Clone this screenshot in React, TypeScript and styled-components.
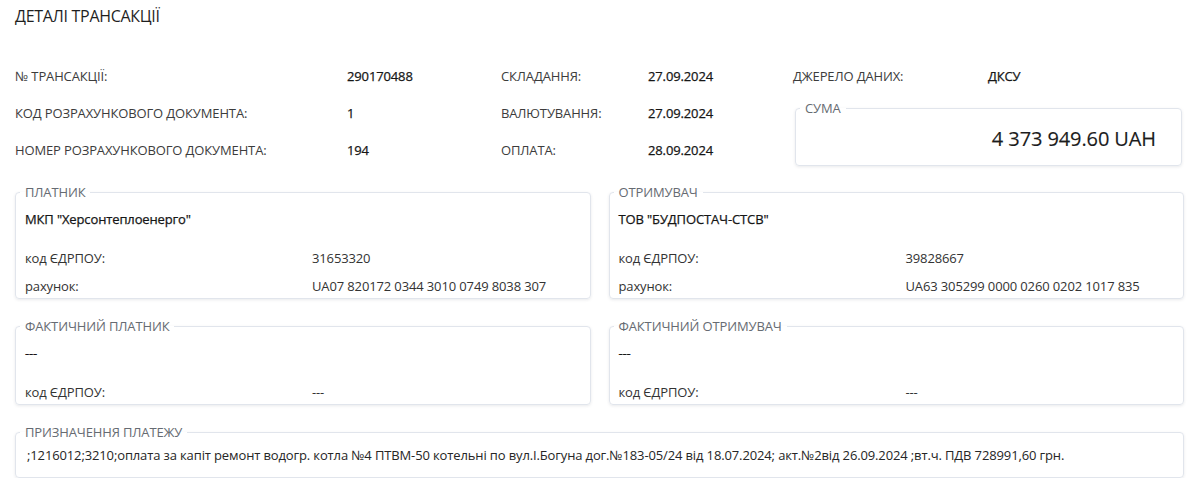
import React from "react";
import styled, { createGlobalStyle } from "styled-components";

const GlobalStyle = createGlobalStyle`
  html, body { margin: 0; padding: 0; background: #ffffff; }
  body { font-family: "Open Sans", "Noto Sans", sans-serif; color: #222; letter-spacing: -0.13px; }
  * { box-sizing: border-box; }
`;

const Page = styled.div`
  padding: 5px 16px 0 15px;
`;

const Title = styled.h1`
  margin: 0;
  font-size: 16px;
  line-height: 22px;
  font-weight: 400;
  letter-spacing: -0.3px;
  color: #1f1f1f;
`;

const InfoGrid = styled.div`
  margin-top: 30px;
  display: grid;
  grid-template-columns: 332px 154px 147px 145px 195px 1fr;
  grid-auto-rows: 37px;
  align-items: center;
  font-size: 13px;
`;

const Label = styled.div`
  color: #3c3c3c;
`;

const Value = styled.div`
  color: #161616;
  font-weight: 400;
  -webkit-text-stroke: 0.25px #161616;
`;

const Box = styled.fieldset`
  margin: 0;
  min-width: 0;
  border: 1px solid #e1e5ec;
  border-radius: 4px;
  box-shadow: 0 1px 3px rgba(40, 50, 70, 0.1);
  padding: 0 10px 0 9px;
`;

const Legend = styled.legend`
  padding: 0 5px;
  margin-left: -5px;
  font-size: 13px;
  line-height: 18px;
  color: #666b72;
`;

const SumBox = styled(Box)`
  grid-column: 5 / 7;
  grid-row: 2 / 4;
  align-self: start;
  margin: 5px 2px 0 2px;
  padding: 8px 25px 12px 9px;
`;

const Amount = styled.div`
  text-align: right;
  font-size: 20px;
  line-height: 28px;
  letter-spacing: -0.1px;
  color: #1c1c1c;
  -webkit-text-stroke: 0.15px #1c1c1c;
`;

const PartyRow = styled.div<{ $top: number }>`
  margin-top: ${(p) => p.$top}px;
  display: grid;
  grid-template-columns: 1fr 1fr;
  column-gap: 18px;
`;

const PartyBox = styled(Box)`
  padding-top: 8px;
  padding-bottom: 2px;
  font-size: 13px;
`;

const PartyName = styled.div`
  line-height: 20px;
  color: #161616;
  -webkit-text-stroke: 0.25px #161616;
  margin-bottom: 19px;
`;

const DetailGrid = styled.div`
  display: grid;
  grid-template-columns: 287px 1fr;
  grid-auto-rows: 20px;
  row-gap: 8px;
  align-items: center;
  color: #333;
`;

const PurposeBox = styled(Box)`
  margin-top: 18px;
  padding-top: 4px;
  padding-bottom: 12px;
  font-size: 13px;
`;

const PurposeText = styled.div`
  line-height: 20px;
  color: #262626;
  padding-left: 2px;
`;

type Party = {
  title: string;
  name: string;
  code: string;
  account?: string;
};

const PartyCard: React.FC<{ party: Party }> = ({ party }) => (
  <PartyBox>
    <Legend>{party.title}</Legend>
    <PartyName>{party.name}</PartyName>
    <DetailGrid>
      <div>код ЄДРПОУ:</div>
      <div>{party.code}</div>
      {party.account && (
        <>
          <div>рахунок:</div>
          <div>{party.account}</div>
        </>
      )}
    </DetailGrid>
  </PartyBox>
);

export default function App() {
  return (
    <>
      <GlobalStyle />
      <Page>
        <Title>ДЕТАЛІ ТРАНСАКЦІЇ</Title>
        <InfoGrid>
          <Label>№ ТРАНСАКЦІЇ:</Label>
          <Value>290170488</Value>
          <Label>СКЛАДАННЯ:</Label>
          <Value>27.09.2024</Value>
          <Label>ДЖЕРЕЛО ДАНИХ:</Label>
          <Value>ДКСУ</Value>

          <Label>КОД РОЗРАХУНКОВОГО ДОКУМЕНТА:</Label>
          <Value>1</Value>
          <Label>ВАЛЮТУВАННЯ:</Label>
          <Value>27.09.2024</Value>
          <SumBox>
            <Legend>СУМА</Legend>
            <Amount>4 373 949.60 UAH</Amount>
          </SumBox>

          <Label>НОМЕР РОЗРАХУНКОВОГО ДОКУМЕНТА:</Label>
          <Value>194</Value>
          <Label>ОПЛАТА:</Label>
          <Value>28.09.2024</Value>
        </InfoGrid>

        <PartyRow $top={15}>
          <PartyCard
            party={{
              title: "ПЛАТНИК",
              name: 'МКП "Херсонтеплоенерго"',
              code: "31653320",
              account: "UA07 820172 0344 3010 0749 8038 307",
            }}
          />
          <PartyCard
            party={{
              title: "ОТРИМУВАЧ",
              name: 'ТОВ "БУДПОСТАЧ-СТСВ"',
              code: "39828667",
              account: "UA63 305299 0000 0260 0202 1017 835",
            }}
          />
        </PartyRow>
        <PartyRow $top={18}>
          <PartyCard party={{ title: "ФАКТИЧНИЙ ПЛАТНИК", name: "---", code: "---" }} />
          <PartyCard party={{ title: "ФАКТИЧНИЙ ОТРИМУВАЧ", name: "---", code: "---" }} />
        </PartyRow>

        <PurposeBox>
          <Legend>ПРИЗНАЧЕННЯ ПЛАТЕЖУ</Legend>
          <PurposeText>
            ;1216012;3210;оплата за капіт ремонт водогр. котла №4 ПТВМ-50 котельні по вул.І.Богуна дог.№183-05/24 від 18.07.2024; акт.№2від 26.09.2024 ;вт.ч. ПДВ 728991,60 грн.
          </PurposeText>
        </PurposeBox>
      </Page>
    </>
  );
}
